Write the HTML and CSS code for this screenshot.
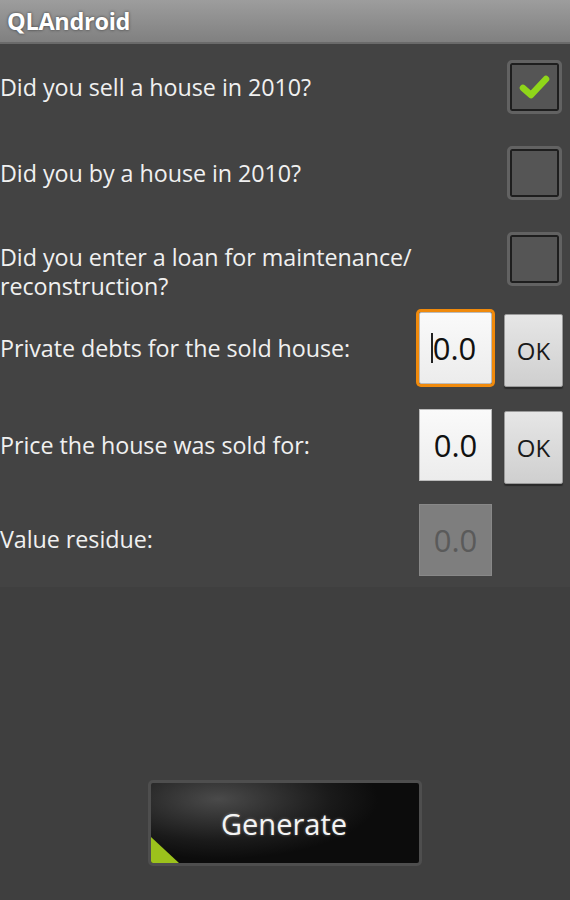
FILE: index.html
```html
<!DOCTYPE html>
<html>
<head>
<meta charset="utf-8">
<link rel="stylesheet" href="styles.css">
</head>
<body>
<div class="screen">
  <header class="titlebar"><span class="title">QLAndroid</span></header>
  <main class="form">
    <div class="row row-check r1">
      <span class="label">Did you sell a house in 2010?</span>
      <span class="checkbox checked">
        <svg viewBox="0 0 40 40" width="40" height="40"><path d="M8 21 L16 28 L31 12" fill="none" stroke="#8fd61a" stroke-width="6.5" stroke-linecap="round" stroke-linejoin="round"/></svg>
      </span>
    </div>
    <div class="row row-check r2">
      <span class="label">Did you by a house in 2010?</span>
      <span class="checkbox"></span>
    </div>
    <div class="row row-check r3">
      <span class="label">Did you enter a loan for maintenance/<br>reconstruction?</span>
      <span class="checkbox"></span>
    </div>
    <div class="row row-input r4">
      <span class="label">Private debts for the sold house:</span>
      <span class="field focused"><span class="caret"></span>0.0</span>
      <span class="okbtn">OK</span>
    </div>
    <div class="row row-input r5">
      <span class="label">Price the house was sold for:</span>
      <span class="field">0.0</span>
      <span class="okbtn">OK</span>
    </div>
    <div class="row row-input r6">
      <span class="label">Value residue:</span>
      <span class="field disabled">0.0</span>
    </div>
  </main>
  <div class="bottom">
    <div class="generate"><span>Generate</span><i class="corner"></i></div>
  </div>
</div>
</body>
</html>
```
FILE: styles.css
```css
html, body {
  margin: 0;
  padding: 0;
  background: #3f3f3f;
}
.screen {
  width: 570px;
  height: 900px;
  display: flex;
  flex-direction: column;
  font-family: "Open Sans", "DejaVu Sans", sans-serif;
  color: #f0f0f0;
}
.titlebar {
  border-bottom: 2px solid #6a6a6a;
  background: linear-gradient(#9d9d9d, #808080);
  display: flex;
  align-items: center;
  padding-left: 7px;
  box-sizing: border-box;
  height: 44px;
}
.title {
  font-weight: bold;
  font-size: 23.5px;
  color: #fff;
  text-shadow: 0 0 3px rgba(0,0,0,0.6);
  letter-spacing: -0.3px;
}
.form {
  background: #434343;
  display: flex;
  flex-direction: column;
  padding-bottom: 2px;
}
.row {
  display: grid;
  grid-template-columns: 1fr 73px 59px;
  column-gap: 12px;
  padding-right: 7px;
  align-items: center;
}
.label {
  font-size: 23.3px;
  letter-spacing: -0.05px;
  color: #f0f0f0;
  line-height: 29px;
  white-space: nowrap;
}
.row-check {
  grid-template-columns: 1fr 55px;
  column-gap: 0;
  padding-right: 8px;
}
.r1 { height: 86px; }
.r2 { height: 86px; }
.r3 { height: 84px; align-items: start; }
.r3 .label { padding-top: 27px; }
.r3 .checkbox { margin-top: 16px; }
.checkbox {
  width: 55px;
  height: 54px;
  box-sizing: border-box;
  border: 3px solid #626262;
  border-radius: 5px;
  background: #555;
  box-shadow: inset 0 0 0 2px #1e1e1e;
  display: flex;
  align-items: center;
  justify-content: center;
}
.r4 { height: 96px; }
.r5 { height: 98px; }
.r6 { height: 91px; }
.field {
  width: 73px;
  height: 72px;
  box-sizing: border-box;
  background: linear-gradient(#fafafa, #ececec);
  border: 1px solid #bbb;
  color: #111;
  font-size: 31px;
  display: flex;
  align-items: center;
  justify-content: center;
  position: relative;
}
.field.focused {
  box-shadow: 0 0 0 3px #f08a0c;
  border-radius: 2px;
}
.caret {
  display: inline-block;
  width: 2px;
  height: 30px;
  background: #222;
  margin-left: -4px;
}
.field.disabled {
  background: #7e7e7e;
  border: 1px solid #888;
  color: #5a5a5a;
}
.okbtn {
  width: 59px;
  height: 73px;
  box-sizing: border-box;
  background: linear-gradient(#e6e6e6, #cfcfcf);
  border: 1px solid #9a9a9a;
  border-radius: 2px;
  color: #1a1a1a;
  font-size: 24px;
  display: flex;
  align-items: center;
  justify-content: center;
  margin-top: 4px;
  box-shadow: 0 2px 1px #2a2a2a;
}
.bottom {
  flex: 1;
  display: flex;
  justify-content: center;
  padding-top: 193px;
}
.generate {
  width: 274px;
  height: 86px;
  box-sizing: border-box;
  border: 3px solid #4e4e4e;
  border-radius: 5px;
  background: radial-gradient(ellipse 160px 60px at 25% 20%, #4a4a4a, #1a1a1a 70%, #0c0c0c);
  position: relative;
  display: flex;
  align-items: center;
  justify-content: center;
  overflow: hidden;
}
.generate span {
  font-size: 29px;
  color: #f4f4f4;
  text-shadow: 0 0 3px rgba(255,255,255,0.35);
  margin-left: -2px;
}
.corner {
  position: absolute;
  left: 0;
  bottom: 0;
  width: 0;
  height: 0;
  border-left: 28px solid #9cc21c;
  border-top: 26px solid transparent;
}
```
